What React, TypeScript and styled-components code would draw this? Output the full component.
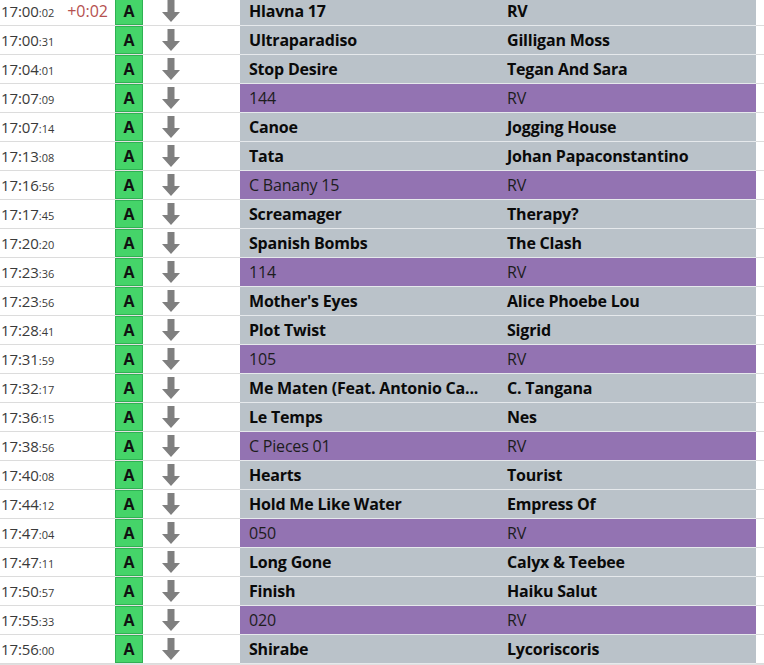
import React from "react";
import styled, { createGlobalStyle } from "styled-components";

const Global = createGlobalStyle`
  html, body { margin: 0; padding: 0; background: #ffffff; overflow: hidden; }
  body { font-family: "Open Sans", "Noto Sans", sans-serif; }
`;

type Item = { t: string; s: string; delta?: string; title: string; artist: string; jingle?: boolean };

const items: Item[] = [
  { t: "17:00", s: ":02", delta: "+0:02", title: "Hlavna 17", artist: "RV" },
  { t: "17:00", s: ":31", title: "Ultraparadiso", artist: "Gilligan Moss" },
  { t: "17:04", s: ":01", title: "Stop Desire", artist: "Tegan And Sara" },
  { t: "17:07", s: ":09", title: "144", artist: "RV", jingle: true },
  { t: "17:07", s: ":14", title: "Canoe", artist: "Jogging House" },
  { t: "17:13", s: ":08", title: "Tata", artist: "Johan Papaconstantino" },
  { t: "17:16", s: ":56", title: "C Banany 15", artist: "RV", jingle: true },
  { t: "17:17", s: ":45", title: "Screamager", artist: "Therapy?" },
  { t: "17:20", s: ":20", title: "Spanish Bombs", artist: "The Clash" },
  { t: "17:23", s: ":36", title: "114", artist: "RV", jingle: true },
  { t: "17:23", s: ":56", title: "Mother's Eyes", artist: "Alice Phoebe Lou" },
  { t: "17:28", s: ":41", title: "Plot Twist", artist: "Sigrid" },
  { t: "17:31", s: ":59", title: "105", artist: "RV", jingle: true },
  { t: "17:32", s: ":17", title: "Me Maten (Feat. Antonio Ca...", artist: "C. Tangana" },
  { t: "17:36", s: ":15", title: "Le Temps", artist: "Nes" },
  { t: "17:38", s: ":56", title: "C Pieces 01", artist: "RV", jingle: true },
  { t: "17:40", s: ":08", title: "Hearts", artist: "Tourist" },
  { t: "17:44", s: ":12", title: "Hold Me Like Water", artist: "Empress Of" },
  { t: "17:47", s: ":04", title: "050", artist: "RV", jingle: true },
  { t: "17:47", s: ":11", title: "Long Gone", artist: "Calyx & Teebee" },
  { t: "17:50", s: ":57", title: "Finish", artist: "Haiku Salut" },
  { t: "17:55", s: ":33", title: "020", artist: "RV", jingle: true },
  { t: "17:56", s: ":00", title: "Shirabe", artist: "Lycoriscoris" },
];

const List = styled.div`
  display: flex;
  flex-direction: column;
  margin-top: -3px;
  width: 764px;
`;

const Row = styled.div`
  display: grid;
  grid-template-columns: 115px 28px 97px 258px 258px 8px;
  height: 29px;
`;

const Cell = styled.div`
  height: 28px;
  border-bottom: 1px solid #dcdcdc;
  display: flex;
  align-items: center;
  overflow: hidden;
`;

const TimeCell = styled(Cell)`
  padding-left: 1px;
  color: #3a3a3a;
  white-space: nowrap;
`;

const Main = styled.span`
  font-size: 15px;
  letter-spacing: -0.1px;
`;

const Sec = styled.span`
  font-size: 11px;
  margin-top: 3px;
`;

const Delta = styled.span`
  font-size: 16px;
  color: #b5504f;
  margin-left: 13px;
`;

const BadgeCell = styled.div`
  height: 29px;
  display: flex;
  flex-direction: column;
`;

const Badge = styled.div`
  box-sizing: border-box;
  height: 28px;
  background: #45d469;
  border: 1px solid #2fb153;
  display: flex;
  align-items: center;
  justify-content: center;
  font-weight: 700;
  font-size: 16px;
  color: #111;
`;

const BadgeGap = styled.div`
  height: 1px;
  background: #e2e2e2;
`;

const ArrowCell = styled(Cell)`
  padding-left: 19px;
`;

const TextCell = styled(Cell)<{ $jingle?: boolean }>`
  background: ${(p) => (p.$jingle ? "#9373b2" : "#bac2c9")};
  border-bottom-color: #e6e9ec;
  padding-left: 9px;
  font-size: 16px;
  font-weight: ${(p) => (p.$jingle ? 400 : 700)};
  color: ${(p) => (p.$jingle ? "#1d1d1d" : "#0a0a0a")};
  white-space: nowrap;
  letter-spacing: -0.2px;
`;

const Footer = styled.div`
  height: 3px;
  background: #e0e0e0;
`;

const DownArrow = () => (
  <svg width="18" height="22" viewBox="0 0 18 22">
    <path d="M5.5 0 H12.5 V12 H18 L9 22 L0 12 H5.5 Z" fill="#7f7f7f" />
  </svg>
);

export default function App() {
  return (
    <>
      <Global />
      <List>
        {items.map((it, i) => (
          <Row key={i}>
            <TimeCell>
              <Main>{it.t}</Main>
              <Sec>{it.s}</Sec>
              {it.delta && <Delta>{it.delta}</Delta>}
            </TimeCell>
            <BadgeCell>
              <Badge>A</Badge>
              <BadgeGap />
            </BadgeCell>
            <ArrowCell>
              <DownArrow />
            </ArrowCell>
            <TextCell $jingle={it.jingle}>{it.title}</TextCell>
            <TextCell $jingle={it.jingle}>{it.artist}</TextCell>
            <Cell />
          </Row>
        ))}
        <Footer />
      </List>
    </>
  );
}
